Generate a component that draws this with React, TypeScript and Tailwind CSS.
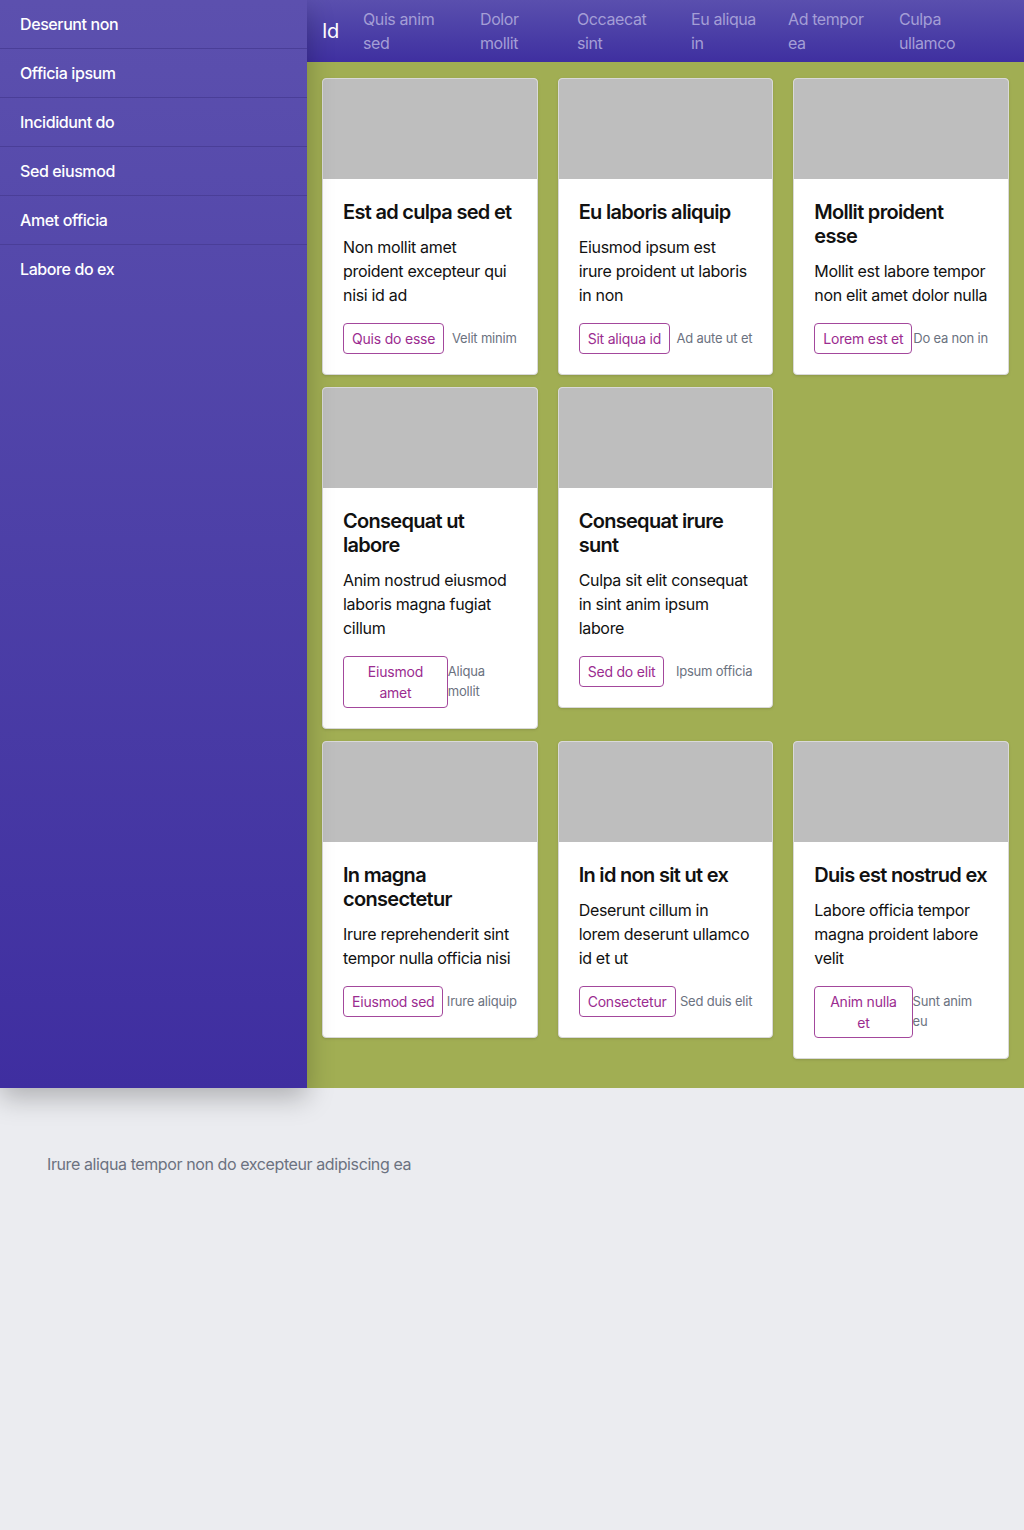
import { FC } from 'react';

interface Card {
  title: string;
  body: string;
  action: string;
  note: string;
}

const sideLinks = ['Deserunt non', 'Officia ipsum', 'Incididunt do', 'Sed eiusmod', 'Amet officia', 'Labore do ex'];

const navLinks = [
  { label: 'Quis anim sed', w: 'w-[117px]' },
  { label: 'Dolor mollit', w: 'w-[97px]' },
  { label: 'Occaecat sint', w: 'w-[114px]' },
  { label: 'Eu aliqua in', w: 'w-[97px]' },
  { label: 'Ad tempor ea', w: 'w-[111px]' },
  { label: 'Culpa ullamco', w: 'w-[100px]' },
];

const cards: (Card | null)[] = [
  { title: 'Est ad culpa sed et', body: 'Non mollit amet proident excepteur qui nisi id ad', action: 'Quis do esse', note: 'Velit minim' },
  { title: 'Eu laboris aliquip', body: 'Eiusmod ipsum est irure proident ut laboris in non', action: 'Sit aliqua id', note: 'Ad aute ut et' },
  { title: 'Mollit proident esse', body: 'Mollit est labore tempor non elit amet dolor nulla', action: 'Lorem est et', note: 'Do ea non in' },
  { title: 'Consequat ut labore', body: 'Anim nostrud eiusmod laboris magna fugiat cillum', action: 'Eiusmod amet', note: 'Aliqua mollit' },
  { title: 'Consequat irure sunt', body: 'Culpa sit elit consequat in sint anim ipsum labore', action: 'Sed do elit', note: 'Ipsum officia' },
  null,
  { title: 'In magna consectetur', body: 'Irure reprehenderit sint tempor nulla officia nisi', action: 'Eiusmod sed', note: 'Irure aliquip' },
  { title: 'In id non sit ut ex', body: 'Deserunt cillum in lorem deserunt ullamco id et ut', action: 'Consectetur', note: 'Sed duis elit' },
  { title: 'Duis est nostrud ex', body: 'Labore officia tempor magna proident labore velit', action: 'Anim nulla et', note: 'Sunt anim eu' },
];

const CardItem: FC<{ card: Card }> = ({ card }) => (
  <div className="bg-white border border-[#d9d9d9] rounded overflow-hidden shadow-sm">
    <div className="h-[100px] bg-[#bebebe]" />
    <div className="px-5 pt-[21px] pb-5">
      <h3 className="text-[20px] leading-6 font-semibold tracking-[-0.035em] text-[#111] mb-[11px]">{card.title}</h3>
      <p className="text-base leading-6 tracking-[-0.02em] text-[#111]">{card.body}</p>
      <div className="flex justify-between items-start mt-4">
        <button className="border border-[#a3479c] rounded text-[#9b2c90] text-sm leading-[21px] tracking-[-0.015em] px-2 py-1 text-center">
          {card.action}
        </button>
        <span className="text-[13px] leading-5 tracking-[-0.015em] text-[#6b7280] pt-[5px]">{card.note}</span>
      </div>
    </div>
  </div>
);

export default function App() {
  return (
    <div className="min-h-[1530px] bg-[#ebecf0] font-['Inter',sans-serif] tracking-[-0.025em]">
      <div className="flex">
        <aside className="w-[307px] shrink-0 bg-gradient-to-b from-[#5c50ae] to-[#3f2ea0] shadow-[0_10px_25px_rgba(0,0,0,0.25)] relative z-10">
          {sideLinks.map((s, i) => (
            <a
              key={s}
              className={`block px-5 py-3 leading-6 text-white font-medium ${i < sideLinks.length - 1 ? 'border-b border-[#4a3e98]' : ''}`}
            >
              {s}
            </a>
          ))}
        </aside>
        <main className="flex-1 bg-[#a1ae53]">
          <header className="h-[62px] flex items-center pl-[15px] bg-gradient-to-b from-[#5a4fae] to-[#3f2fa0]">
            <span className="text-white text-[20px] leading-6 w-[41px]">Id</span>
            <nav className="flex">
              {navLinks.map((n) => (
                <a key={n.label} className={`${n.w} pr-5 text-base leading-6 text-[#a49ed6]`}>
                  {n.label}
                </a>
              ))}
            </nav>
          </header>
          <div className="grid grid-cols-3 gap-x-5 gap-y-3 items-start px-[15px] pt-4 pb-[29px]">
            {cards.map((c, i) => (c ? <CardItem key={i} card={c} /> : <div key={i} />))}
          </div>
        </main>
      </div>
      <footer className="bg-[#ebecf0] rounded-t-lg px-[47px] pt-16 pb-16">
        <p className="text-[#6b7280] leading-6">Irure aliqua tempor non do excepteur adipiscing ea</p>
      </footer>
    </div>
  );
}
